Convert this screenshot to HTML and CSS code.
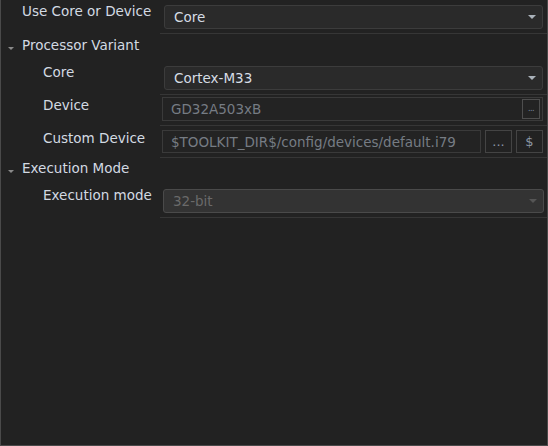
FILE: index.html
```html
<!DOCTYPE html>
<html>
<head>
<meta charset="utf-8">
<link rel="stylesheet" href="styles.css">
</head>
<body>
<div class="panel">
  <div class="row row-a">
    <div class="label top">Use Core or Device</div>
    <div class="value"><div class="combo"><span>Core</span><span class="arrow"></span></div></div>
  </div>
  <div class="group g1"><span class="tri"></span>Processor Variant</div>
  <div class="row row-b">
    <div class="label sub">Core</div>
    <div class="value"><div class="combo"><span>Cortex-M33</span><span class="arrow"></span></div></div>
  </div>
  <div class="row row-c">
    <div class="label sub">Device</div>
    <div class="value v-dev"><div class="input"><span>GD32A503xB</span><span class="mini">...</span></div></div>
  </div>
  <div class="row row-d">
    <div class="label sub">Custom Device</div>
    <div class="value v-custom"><div class="input grow"><span>$TOOLKIT_DIR$/config/devices/default.i79</span></div><div class="btn">...</div><div class="btn">$</div></div>
  </div>
  <div class="group g2"><span class="tri"></span>Execution Mode</div>
  <div class="row row-e">
    <div class="label sub">Execution mode</div>
    <div class="value v-exec"><div class="combo disabled"><span>32-bit</span><span class="arrow"></span></div></div>
  </div>
</div>
</body>
</html>
```

FILE: styles.css
```css
html, body {
  margin: 0;
  padding: 0;
  background: #222222;
}
.panel {
  width: 548px;
  height: 446px;
  box-sizing: border-box;
  background: #222222;
  border-left: 1px solid #4a4a4a;
  border-right: 1px solid #4a4a4a;
  border-bottom: 1px solid #4a4a4a;
  font-family: "DejaVu Sans", Verdana, sans-serif;
  font-size: 13.5px;
  line-height: 16px;
  color: #d3dae2;
}
.row {
  display: grid;
  grid-template-columns: 159px 1fr;
}
.label {
  white-space: nowrap;
}
.label.top { padding-left: 21px; }
.label.sub { padding-left: 42px; }
.value {
  border-bottom: 1px solid #363636;
  padding-right: 4px;
  display: flex;
  gap: 4px;
}
.row-a .label { padding-top: 3px; }
.row-a .value { padding: 5px 4px 4px 4px; }
.row-b .label { padding-top: 2px; }
.row-b .value { padding: 4px 4px 4px 4px; }
.row-c .label { padding-top: 2px; }
.row-c .value { padding: 2px 4px 4px 2px; }
.row-d .label { padding-top: 4px; }
.row-d .value { padding: 4px 4px 4px 2px; }
.row-e .label { padding-top: 3px; }
.row-e .value { padding: 5px 3px 4px 3px; }

.group {
  box-sizing: border-box;
  position: relative;
  padding-left: 21px;
  white-space: nowrap;
}
.g1 { height: 28px; padding-top: 3px; }
.g2 { height: 26px; padding-top: 2px; }
.tri {
  position: absolute;
  left: 7px;
  width: 0;
  height: 0;
  border-left: 3.5px solid transparent;
  border-right: 3.5px solid transparent;
  border-top: 3px solid #8a8a8a;
}
.g1 .tri { top: 13px; }
.g2 .tri { top: 12px; }

.combo {
  flex: 1;
  box-sizing: border-box;
  height: 24px;
  background: #2a2a2a;
  border: 1px solid #3c3c3c;
  border-radius: 3px;
  display: flex;
  align-items: center;
  justify-content: space-between;
  padding: 0 6px 0 9px;
  color: #d6dde5;
}
.arrow {
  width: 0;
  height: 0;
  border-left: 4px solid transparent;
  border-right: 4px solid transparent;
  border-top: 4px solid #aab2ba;
}
.combo.disabled {
  background: #333333;
  border-color: #4a4a4a;
  color: #6a6a6a;
}
.combo.disabled .arrow { border-top-color: #555555; }

.input {
  flex: 1;
  box-sizing: border-box;
  height: 24px;
  background: #232323;
  border: 1px solid #3a3a3a;
  display: flex;
  align-items: center;
  justify-content: space-between;
  padding: 0 2px 0 8px;
  color: #767c84;
  white-space: nowrap;
  overflow: hidden;
}
.row-d .input { height: 23px; }
.mini {
  box-sizing: border-box;
  width: 18px;
  height: 20px;
  border: 1px solid #4e4e4e;
  font-size: 8px;
  line-height: 18px;
  text-align: center;
  color: #7a8aa0;
  letter-spacing: -0.5px;
  display: flex;
  align-items: flex-end;
  justify-content: center;
}
.btn {
  box-sizing: border-box;
  width: 27px;
  height: 23px;
  border: 1px solid #444444;
  color: #8a96a4;
  display: flex;
  align-items: center;
  justify-content: center;
  font-size: 13px;
}
```
